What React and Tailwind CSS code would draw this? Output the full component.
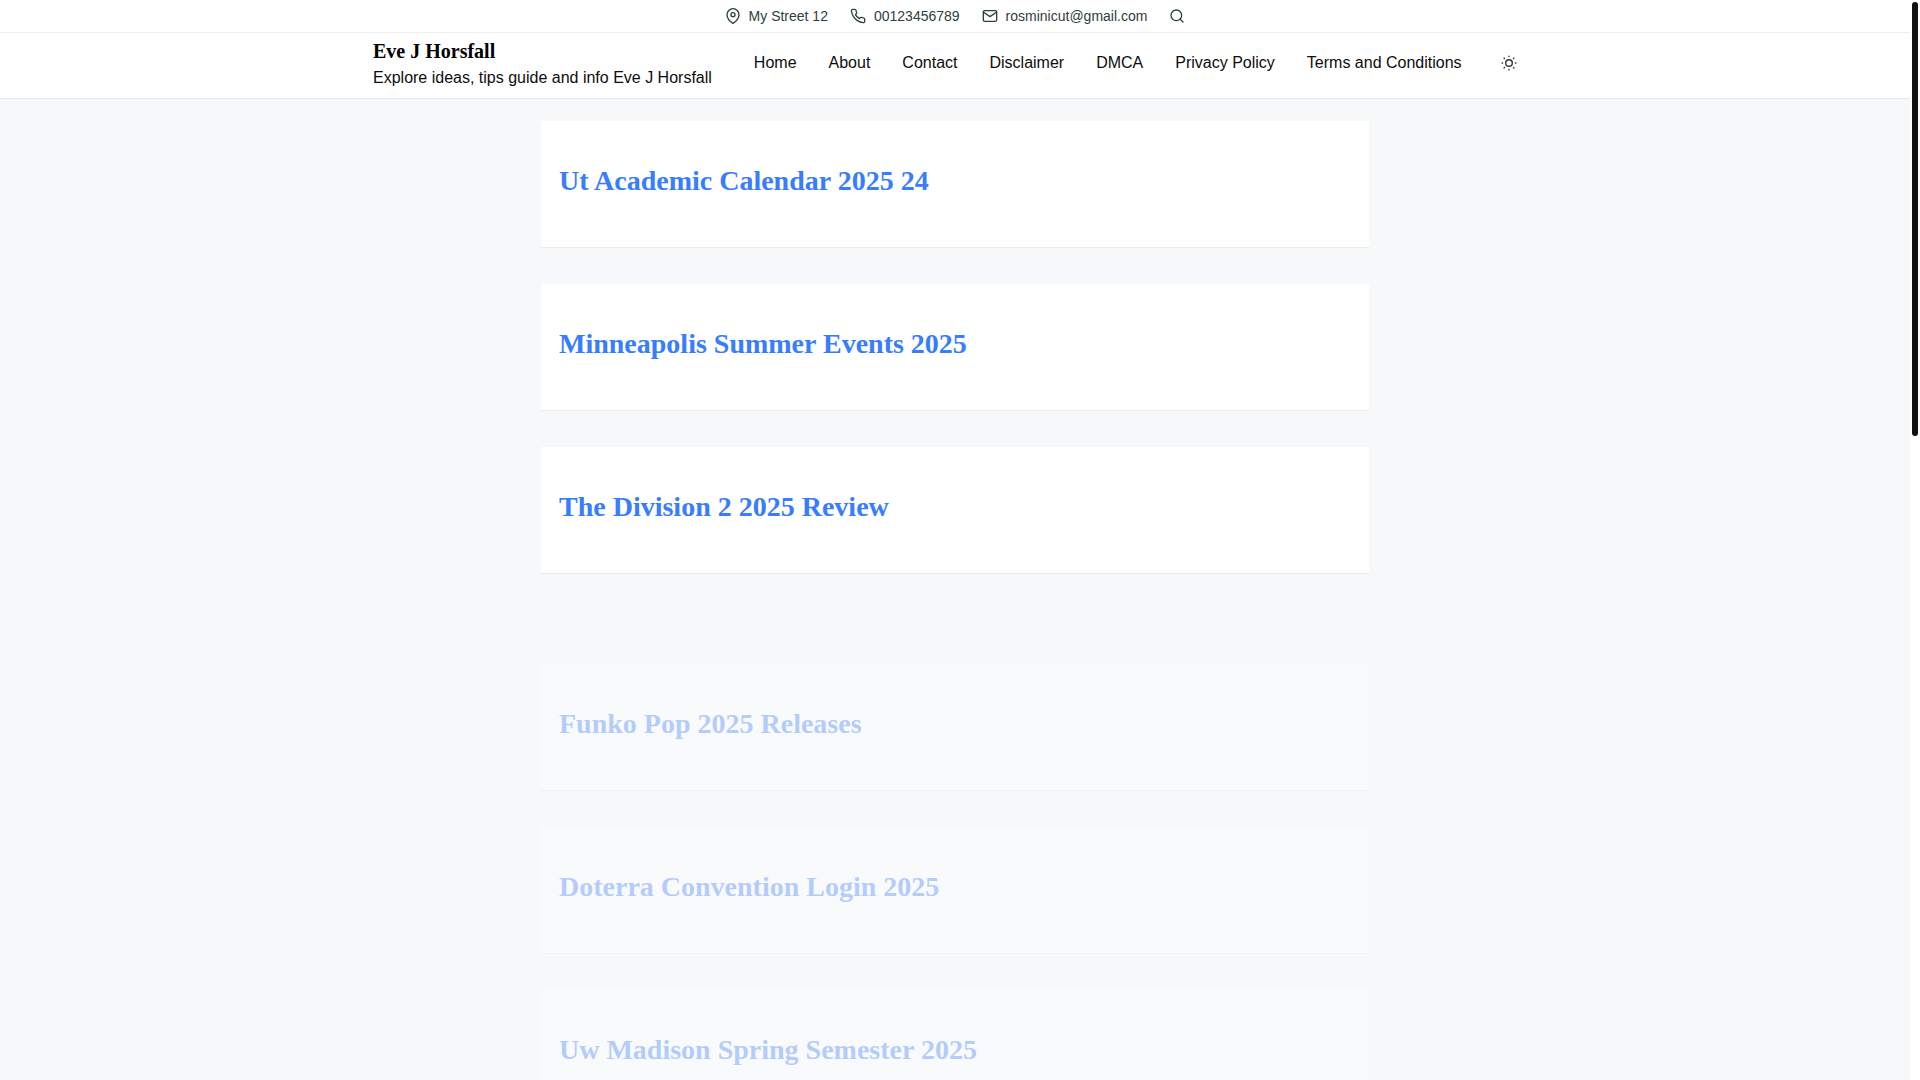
import React from 'react';
import { FiMapPin, FiPhone, FiMail, FiSearch } from 'react-icons/fi';

const navLinks = ['Home', 'About', 'Contact', 'Disclaimer', 'DMCA', 'Privacy Policy', 'Terms and Conditions'];

const contacts = [
  { icon: FiMapPin, text: 'My Street 12' },
  { icon: FiPhone, text: '00123456789' },
  { icon: FiMail, text: 'rosminicut@gmail.com' },
];

const posts = ['Ut Academic Calendar 2025 24', 'Minneapolis Summer Events 2025', 'The Division 2 2025 Review'];

const incomingPosts = ['Funko Pop 2025 Releases', 'Doterra Convention Login 2025', 'Uw Madison Spring Semester 2025'];

function SunIcon() {
  return (
    <svg width="16" height="16" viewBox="0 0 16 16" fill="none" stroke="currentColor" strokeLinecap="round">
      <circle cx="8" cy="8" r="3.3" strokeWidth="1.4" />
      <path
        d="M8 1.1v.5M8 14.4v.5M1.1 8h.5M14.4 8h.5M3.1 3.1l.3.3M12.6 12.6l.3.3M3.1 12.9l.3-.3M12.6 3.4l.3-.3"
        strokeWidth="1.4"
      />
    </svg>
  );
}

function TopBar() {
  return (
    <div className="flex h-[33px] items-center justify-center gap-[22px] border-b border-[#eeeeee] bg-white text-sm text-[#2f4040]">
      {contacts.map(({ icon: Icon, text }) => (
        <div key={text} className="flex items-center gap-2">
          <Icon className="size-4" />
          <span>{text}</span>
        </div>
      ))}
      <button type="button" aria-label="Search">
        <FiSearch className="size-4" />
      </button>
    </div>
  );
}

function Header() {
  return (
    <header className="border-b border-[#e6e7e9] bg-white">
      <div className="mx-auto flex h-[65px] max-w-[1164px] items-center pb-[5px]">
        <div className="shrink-0">
          <a href="#" className="block font-['Liberation_Serif',serif] text-xl leading-[30px] font-bold text-black">
            Eve J Horsfall
          </a>
          <p className="text-base leading-6">Explore ideas, tips guide and info Eve J Horsfall</p>
        </div>
        <nav className="ml-[42px] flex gap-8">
          {navLinks.map((link) => (
            <a key={link} href="#" className="whitespace-nowrap">
              {link}
            </a>
          ))}
        </nav>
        <button type="button" aria-label="Toggle dark mode" className="ml-[39px] text-[#333333]">
          <SunIcon />
        </button>
      </div>
    </header>
  );
}

function PostCard({ title }) {
  return (
    <article className="border-b border-[#eaebed] bg-white px-[18px] pt-[39px] pb-[45px]">
      <h2 className="font-['Liberation_Serif',serif] text-[28px] leading-[42px] font-bold text-[#387cff]">
        <a href="#">{title}</a>
      </h2>
    </article>
  );
}

function App() {
  return (
    <div className="flex h-screen overflow-hidden bg-[#f6f8fa] font-['Liberation_Sans',sans-serif] text-[#0d0d0d]">
      <div className="min-w-0 flex-1">
        <TopBar />
        <Header />
        <main className="mx-auto max-w-[828px] pt-[22px]">
          <div className="flex flex-col gap-9">
            {posts.map((title) => (
              <PostCard key={title} title={title} />
            ))}
          </div>
          <div className="mt-[90px] flex flex-col gap-9 opacity-35">
            {incomingPosts.map((title) => (
              <PostCard key={title} title={title} />
            ))}
          </div>
        </main>
      </div>
      {/* Scrollbar */}
      <div className="w-[10px] bg-white p-0.5">
        <div className="h-[434px] rounded-full bg-[#111111]" />
      </div>
    </div>
  );
}

export default App;
